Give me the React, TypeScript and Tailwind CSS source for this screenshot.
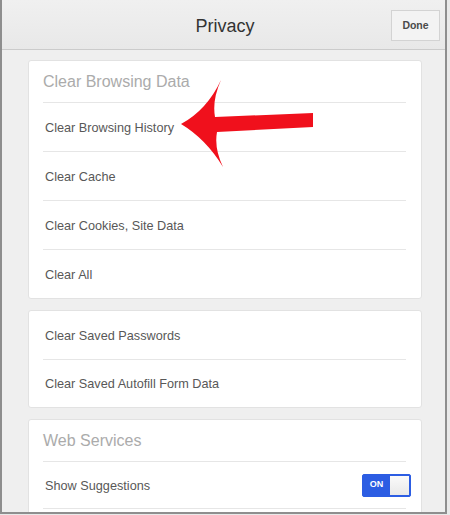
import React from "react";

const font = { fontFamily: '"Liberation Sans", Arial, Helvetica, sans-serif' };

function Row({ label, h = "h-[49px]" }: { label: string; h?: string }) {
  return (
    <div
      className={`${h} flex items-center pl-[2px] pt-[3px] text-[12.7px] text-[#585858] border-t border-[#e6e6e6]`}
    >
      {label}
    </div>
  );
}

function CardHeader({ label }: { label: string }) {
  return (
    <div className="h-[41px] flex items-center text-[16px] text-[#ababab]">{label}</div>
  );
}

export default function App() {
  return (
    <div className="w-[450px] h-[515px] bg-[#e9e9e9] relative overflow-hidden" style={font}>
      <div className="w-[447px] h-[514px] border-l-2 border-r-2 border-b-2 border-[#8e8e8e] bg-[#efefef] flex flex-col overflow-hidden">
        {/* Header */}
        <div className="h-[50px] shrink-0 border-b border-[#cbcbcb] bg-gradient-to-b from-[#f0f0f0] to-[#e8e8e8] flex items-center relative">
          <div className="flex-1 text-center text-[18px] text-[#333333] pl-[3px] pt-[3px]">Privacy</div>
          <div className="absolute right-[5px] top-[10px] w-[49px] h-[31px] border border-[#d3d3d3] bg-[#f3f3f3] flex items-center justify-center text-[10.5px] font-bold text-[#4a4a4a]">
            Done
          </div>
        </div>

        {/* Body */}
        <div className="flex flex-col gap-[11px] pt-[10px] pl-[26px]">
          <div className="w-[394px] bg-white rounded-[3px] border border-[#e2e2e2] pl-[14px] pr-[15px]">
            <CardHeader label="Clear Browsing Data" />
            <Row label="Clear Browsing History" />
            <Row label="Clear Cache" />
            <Row label="Clear Cookies, Site Data" />
            <Row label="Clear All" />
          </div>

          <div className="w-[394px] bg-white rounded-[3px] border border-[#e2e2e2] pl-[14px] pr-[15px]">
            <div className="h-[48px] flex items-center pl-[2px] pt-[3px] text-[12.7px] text-[#585858]">
              Clear Saved Passwords
            </div>
            <Row label="Clear Saved Autofill Form Data" h="h-[48px]" />
          </div>

          <div className="w-[394px] bg-white rounded-[3px] border border-[#e2e2e2] pl-[14px] pr-[15px] h-[120px]">
            <CardHeader label="Web Services" />
            <div className="h-[48px] flex items-center justify-between pl-[2px] text-[12.7px] text-[#585858] border-t border-b border-[#e6e6e6]">
              <span className="pt-[3px]">Show Suggestions</span>
              <div className="mr-[-5px] w-[49px] h-[23px] rounded-[2px] bg-[#2c5de3] border border-[#2c5de3] flex items-center">
                <span className="w-[27px] text-center text-[9px] font-bold text-white">ON</span>
                <div className="w-[19px] h-[19px] bg-gradient-to-b from-[#fafafa] to-[#e9e9e9]" />
              </div>
            </div>
          </div>
        </div>
      </div>

      {/* Red arrow annotation */}
      <svg
        className="absolute inset-0 pointer-events-none"
        width={450}
        height={515}
        viewBox="0 0 450 515"
      >
        <path
          d="M 181 124 Q 207 110 221 80 Q 212 100 215 117 L 313 113 L 313 127 L 217 132 Q 214 148 223 167 Q 206 139 181 124 Z"
          fill="#f0101c"
        />
      </svg>
    </div>
  );
}
